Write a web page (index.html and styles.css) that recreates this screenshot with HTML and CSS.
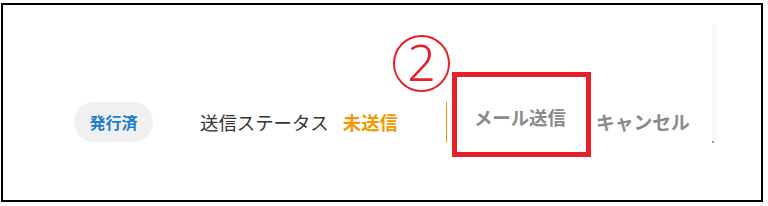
FILE: index.html
```html
<!DOCTYPE html>
<html lang="ja">
<head>
    <meta charset="UTF-8">
    <title>送信ステータス</title>
    <link rel="stylesheet" href="styles.css">
</head>
<body>

    <div class="cadre">
        <span class="badge">発行済</span>
        <span class="statut-label">送信ステータス</span>
        <span class="statut-valeur">未送信</span>
        <div class="bouton-mail">メール送信</div>
        <div class="bouton-annuler">キャンセル</div>
        <div class="bord-gris"><span class="point"></span></div>

        <!-- annotations -->
        <div class="numero">2</div>
        <div class="encadre"></div>
    </div>

</body>
</html>
```

FILE: styles.css
```css
* {
    padding: 0;
    margin: 0;
    box-sizing: border-box;
}

body {
    width: 768px;
    height: 206px;
    background-color: white;
    font-family: "Noto Sans CJK JP", "Noto Sans", sans-serif;
}

.cadre {
    position: relative;
    margin: 3px 0 0 1px;
    width: 762px;
    height: 199px;
    border: 2px solid black;
    display: flex;
    align-items: center;
    padding: 38px 0 0 71px;
}

.badge {
    width: 79px;
    height: 40px;
    border-radius: 20px;
    background-color: #f0f0f1;
    color: #1a7dcb;
    font-size: 16px;
    font-weight: bold;
    display: flex;
    justify-content: center;
    align-items: center;
}

.statut-label {
    margin-left: 47px;
    font-size: 18.4px;
    color: #333;
}

.statut-valeur {
    margin-left: 14px;
    font-size: 18.4px;
    font-weight: bold;
    color: #f39800;
}

.bouton-mail {
    margin-left: 48px;
    height: 40px;
    border-left: 1px solid #f39800;
    padding: 0 0 10px 27px;
    display: flex;
    align-items: center;
    font-size: 18.4px;
    font-weight: bold;
    color: #8a8a8a;
}

.bouton-annuler {
    margin-left: 30px;
    font-size: 18.8px;
    font-weight: bold;
    color: #8a8a8a;
}

.bord-gris {
    position: relative;
    align-self: flex-start;
    margin: -18px 0 0 22px;
    width: 5px;
    height: 115px;
    background-color: #f8f8f8;
}

.point {
    position: absolute;
    left: 0;
    bottom: -3px;
    width: 2px;
    height: 2px;
    background-color: #999;
}

.numero {
    position: absolute;
    left: 390px;
    top: 30px;
    width: 57px;
    height: 57px;
    border: 2px solid #e8202a;
    border-radius: 50%;
    color: #e8202a;
    font-family: "Noto Sans", sans-serif;
    font-weight: 300;
    font-size: 50px;
    line-height: 51px;
    text-align: center;
}

.encadre {
    position: absolute;
    left: 449px;
    top: 67px;
    width: 139px;
    height: 85px;
    border: 5px solid #e8202a;
}
```
